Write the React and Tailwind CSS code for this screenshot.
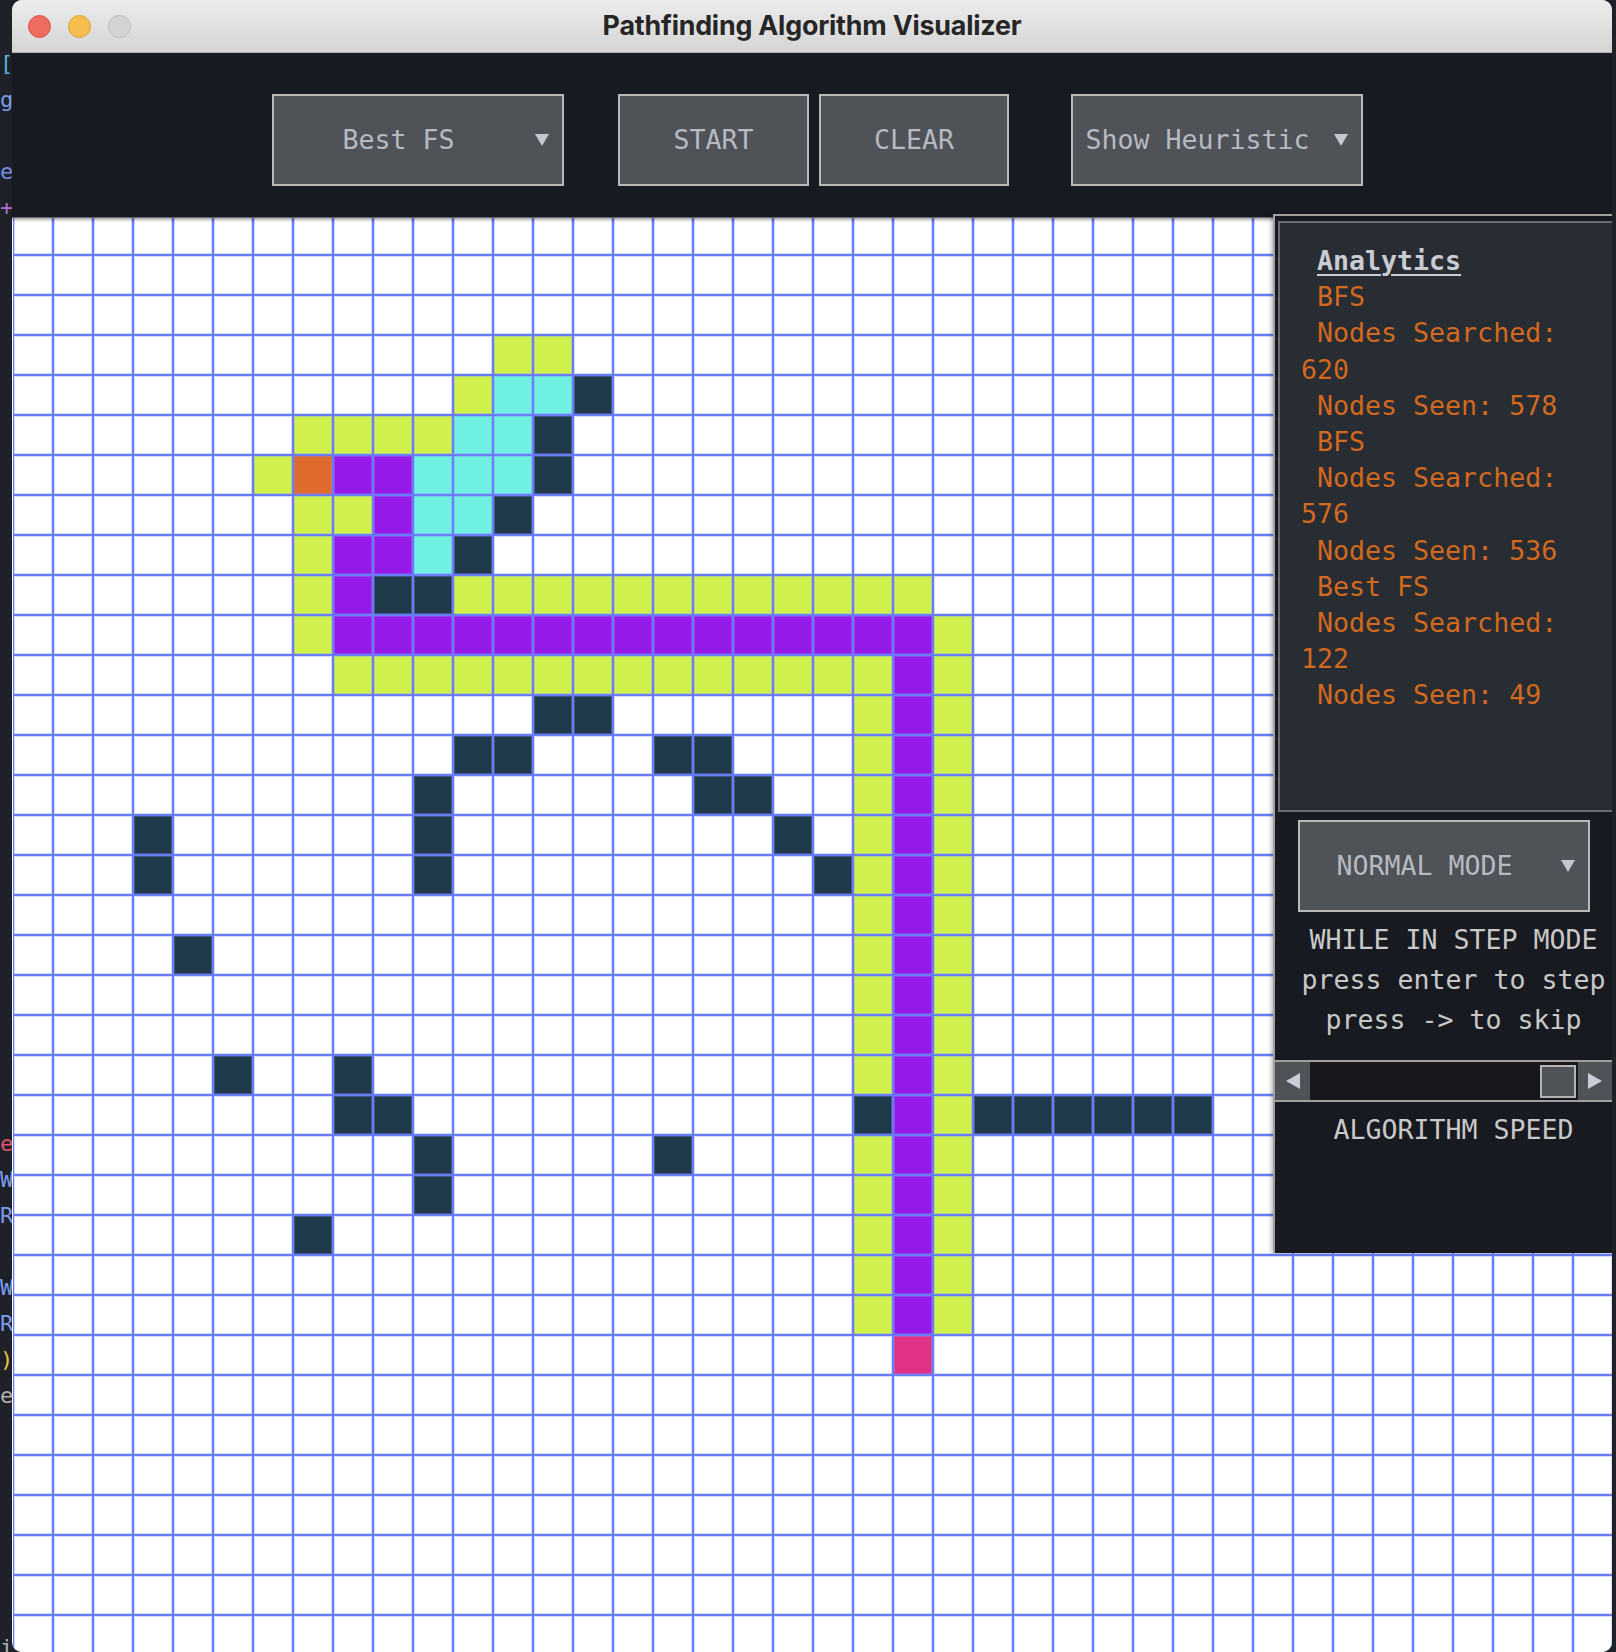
import { useMemo } from 'react';

const ROWS = 36;
const COLS = 40;

// row, from col, to col, kind
const marks = [
    [3, 12, 13, 'y'],
    [4, 11, 11, 'y'], [4, 12, 13, 'c'], [4, 14, 14, 'w'],
    [5, 7, 10, 'y'], [5, 11, 12, 'c'], [5, 13, 13, 'w'],
    [6, 6, 6, 'y'], [6, 7, 7, 'o'], [6, 8, 9, 'p'], [6, 10, 12, 'c'], [6, 13, 13, 'w'],
    [7, 7, 8, 'y'], [7, 9, 9, 'p'], [7, 10, 11, 'c'], [7, 12, 12, 'w'],
    [8, 7, 7, 'y'], [8, 8, 9, 'p'], [8, 10, 10, 'c'], [8, 11, 11, 'w'],
    [9, 7, 7, 'y'], [9, 8, 8, 'p'], [9, 9, 10, 'w'], [9, 11, 22, 'y'],
    [10, 7, 7, 'y'], [10, 8, 22, 'p'], [10, 23, 23, 'y'],
    [11, 8, 21, 'y'], [11, 22, 22, 'p'], [11, 23, 23, 'y'],
    [12, 13, 14, 'w'],
    [13, 11, 12, 'w'], [13, 16, 17, 'w'],
    [14, 10, 10, 'w'], [14, 17, 18, 'w'],
    [15, 3, 3, 'w'], [15, 10, 10, 'w'], [15, 19, 19, 'w'],
    [16, 3, 3, 'w'], [16, 10, 10, 'w'], [16, 20, 20, 'w'],
    [18, 4, 4, 'w'],
    [21, 5, 5, 'w'], [21, 8, 8, 'w'],
    [22, 8, 9, 'w'], [22, 21, 21, 'w'], [22, 24, 29, 'w'],
    [23, 10, 10, 'w'], [23, 16, 16, 'w'],
    [24, 10, 10, 'w'],
    [25, 7, 7, 'w'],
    [28, 22, 22, 'k'],
];

const cellColor = {
    y: 'bg-[#d0f04c]',
    p: 'bg-[#961be8]',
    c: 'bg-[#70f0e0]',
    w: 'bg-[#1e3a4b]',
    o: 'bg-[#e06a2c]',
    k: 'bg-[#e03287]',
};

const editorLines = {
    0: ['[', 'text-[#5ab0d8]'],
    1: ['g', 'text-[#7a9ce8]'],
    3: ['e', 'text-[#7a8ee8]'],
    4: ['+', 'text-[#b070d0]'],
    30: ['e', 'text-[#e0506a]'],
    31: ['W', 'text-[#7a9ce8]'],
    32: ['R', 'text-[#7a9ce8]'],
    34: ['W', 'text-[#7a9ce8]'],
    35: ['R', 'text-[#7a9ce8]'],
    36: [')', 'text-[#e8c040]'],
    37: ['e', 'text-[#b0b0b0]'],
    44: ['i', 'text-[#b0b0b0]'],
};

const analytics = [
    ' BFS',
    ' Nodes Searched:',
    '620',
    ' Nodes Seen: 578',
    ' BFS',
    ' Nodes Searched:',
    '576',
    ' Nodes Seen: 536',
    ' Best FS',
    ' Nodes Searched:',
    '122',
    ' Nodes Seen: 49',
];

const mono = "font-['DejaVu_Sans_Mono',monospace]";

function buildGrid() {
    const g = Array.from({ length: ROWS }, () => Array(COLS).fill(null));
    for (let r = 12; r <= 27; r++) {
        g[r][21] = 'y';
        g[r][22] = 'p';
        g[r][23] = 'y';
    }
    marks.forEach(([r, a, b, k]) => {
        for (let c = a; c <= b; c++) g[r][c] = k;
    });
    return g;
}

function DownArrow() {
    return (
        <svg width="14" height="12" viewBox="0 0 14 12" className="shrink-0">
            <path d="M0 0 L14 0 L7 12 Z" fill="#c4c8d0" />
        </svg>
    );
}

function Dropdown({ label }) {
    return (
        <div className="flex h-[92px] w-[292px] items-center border-2 border-[#b9b9b9] bg-[#4f5257]">
            <span className="flex-1 text-center text-[#b6bac2]">{label}</span>
            <span className="ml-[12px] mr-[13px]"><DownArrow /></span>
        </div>
    );
}

function Button({ label, width }) {
    return (
        <div className={`flex h-[92px] items-center justify-center border-2 border-[#b9b9b9] bg-[#4f5257] text-[#b6bac2] ${width}`}>
            {label}
        </div>
    );
}

export default function App() {
    const grid = useMemo(buildGrid, []);

    return (
        <div className="flex h-[1652px] w-[1616px] overflow-hidden bg-[#1e2128]">
            {/* editor peeking behind the window */}
            <div className={`w-[12px] shrink-0 overflow-hidden pt-[46px] text-[22px] ${mono}`}>
                {Array.from({ length: 46 }, (_, i) => (
                    <div key={i} className={`h-[36px] leading-[36px] ${editorLines[i]?.[1] || ''}`}>
                        {editorLines[i]?.[0] || ''}
                    </div>
                ))}
            </div>

            {/* app window */}
            <div className="flex h-[1652px] w-[1600px] shrink-0 flex-col overflow-hidden rounded-[10px] bg-white">
                {/* title bar */}
                <div className="relative flex h-[53px] shrink-0 items-center border-b border-[#b3b3b3] bg-gradient-to-b from-[#ececec] to-[#d5d5d5]">
                    <div className="flex gap-[17px] pl-[16px]">
                        <span className="h-[23px] w-[23px] rounded-full border border-[#d8554a] bg-[#ee6b60]" />
                        <span className="h-[23px] w-[23px] rounded-full border border-[#d9a23c] bg-[#f6be4f]" />
                        <span className="h-[23px] w-[23px] rounded-full border border-[#bcbcbc] bg-[#d4d4d4]" />
                    </div>
                    <div className="pointer-events-none absolute inset-0 flex items-center justify-center pb-[2px]">
                        <span className="font-['Inter',sans-serif] text-[26.8px] font-bold tracking-[-0.2px] text-[#262626]">
                            Pathfinding Algorithm Visualizer
                        </span>
                    </div>
                </div>

                {/* body */}
                <div className={`relative flex-1 text-[26.6px] ${mono}`}>
                    {/* toolbar */}
                    <div className="relative z-10 flex h-[165px] items-start border-b border-[#65676c] bg-[#181a21] pl-[260px] pt-[41px] shadow-[0_2px_3px_rgba(0,0,0,0.35)]">
                        <Dropdown label="Best FS" />
                        <div className="ml-[54px] flex gap-[10px]">
                            <Button label="START" width="w-[191px]" />
                            <Button label="CLEAR" width="w-[190px]" />
                        </div>
                        <div className="ml-[62px]">
                            <Dropdown label="Show Heuristic" />
                        </div>
                    </div>

                    {/* grid */}
                    <div className="-mt-[3px] ml-[1px] grid auto-rows-[40px] grid-cols-[repeat(40,40px)]">
                        {grid.map((row, r) =>
                            row.map((v, c) => (
                                <div
                                    key={`${r}-${c}`}
                                    className={`border border-[#6a7cf7] shadow-[inset_0_0_0_1px_rgba(130,148,255,0.35)] ${cellColor[v] || 'bg-white'}`}
                                />
                            ))
                        )}
                    </div>

                    {/* side panel */}
                    <div className="absolute left-[1261px] top-[161px] z-20 flex h-[1039px] w-[339px] flex-col overflow-hidden border-l-2 border-t-2 border-[#a0a0a0] bg-[#181a21] shadow-[-2px_0_4px_rgba(0,0,0,0.25)]">
                        <div className="ml-[3px] mt-[5px] h-[591px] w-[400px] shrink-0 border-2 border-[#6b6f75] bg-[#282c33] pl-[21px] pt-[20px] leading-[36.2px]">
                            <div className="ml-[16px] font-bold text-[#c9ccd3] underline decoration-2 underline-offset-[4px]">
                                Analytics
                            </div>
                            {analytics.map((line, i) => (
                                <div key={i} className="whitespace-pre text-[#d2691e]">
                                    {line}
                                </div>
                            ))}
                        </div>

                        <div className="ml-[23px] mt-[8px]">
                            <Dropdown label="NORMAL MODE" />
                        </div>

                        <div className="mt-[8px] whitespace-pre pl-[20px] text-center leading-[40px] text-[#c8c8c8]">
                            <div>WHILE IN STEP MODE</div>
                            <div>press enter to step</div>
                            <div>press -&gt; to skip</div>
                        </div>

                        <div className="mt-[20px] flex h-[42px] shrink-0 border-y-2 border-[#a0a0a0]">
                            <div className="flex w-[35px] items-center justify-center bg-[#4f5257]">
                                <svg width="14" height="16" viewBox="0 0 14 16">
                                    <path d="M14 0 L14 16 L0 8 Z" fill="#c8ccd8" />
                                </svg>
                            </div>
                            <div className="flex flex-1 items-center justify-end bg-[#16181d] pr-[2px]">
                                <div className="h-[33px] w-[36px] border-2 border-[#b4b4b4] bg-[#4f5257]" />
                            </div>
                            <div className="flex w-[34px] items-center justify-center bg-[#4f5257]">
                                <svg width="14" height="16" viewBox="0 0 14 16">
                                    <path d="M0 0 L0 16 L14 8 Z" fill="#c8ccd8" />
                                </svg>
                            </div>
                        </div>

                        <div className="mt-[8px] pl-[20px] text-center leading-[40px] text-[#c8c8c8]">
                            ALGORITHM SPEED
                        </div>
                    </div>
                </div>
            </div>
        </div>
    );
}
